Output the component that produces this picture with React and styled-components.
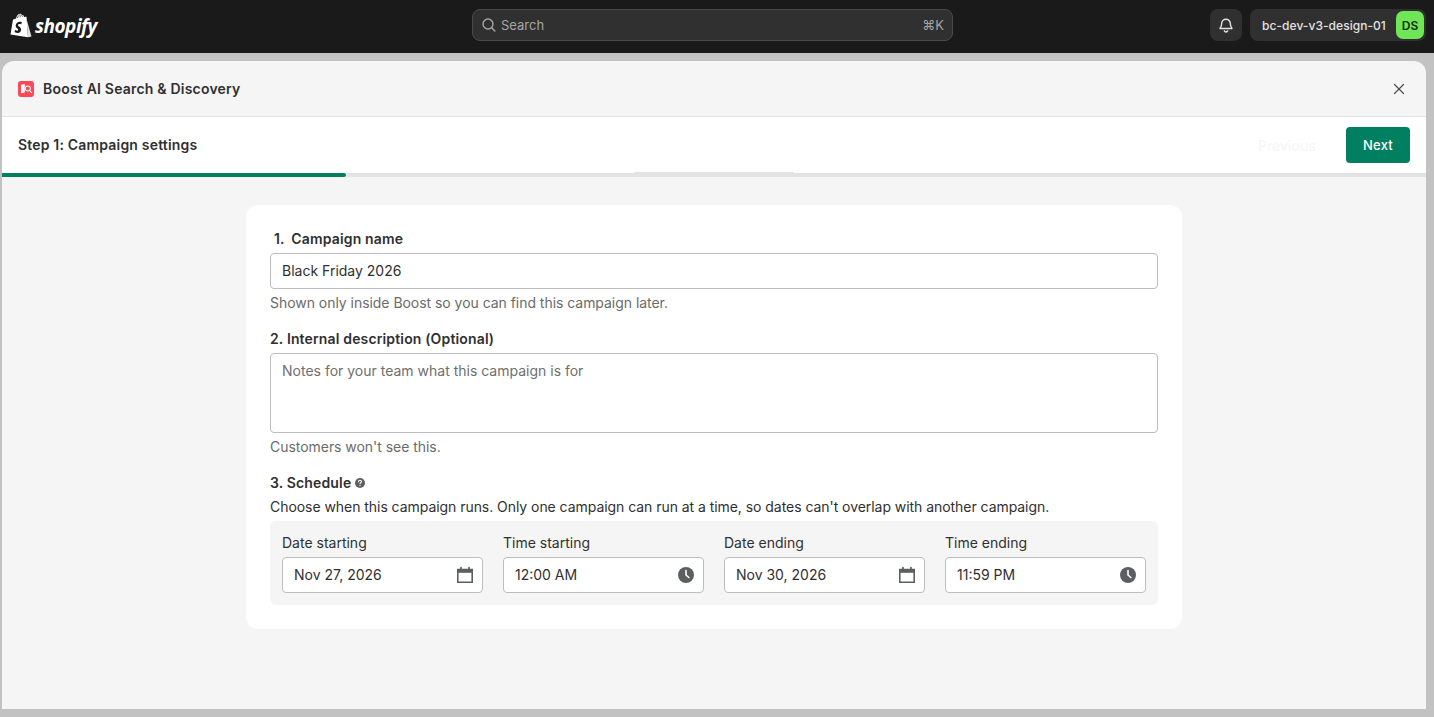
import React from 'react';
import styled, { createGlobalStyle } from 'styled-components';
import { X } from 'lucide-react';

const GlobalStyle = createGlobalStyle`
  html, body {
    margin: 0;
    padding: 0;
    height: 100%;
    overflow: hidden;
    background: #c2c2c2;
    font-family: Inter, "Liberation Sans", sans-serif;
    -webkit-font-smoothing: antialiased;
  }
  * { box-sizing: border-box; }
`;

const Page = styled.div`
  height: 717px;
  display: flex;
  flex-direction: column;
`;

const TopBar = styled.header`
  height: 53px;
  flex: none;
  background: #1a1a1a;
  display: grid;
  grid-template-columns: 452px 481px 1fr;
  align-items: center;
  padding: 0 8px 3px 10px;
  gap: 10px;
`;

const Logo = styled.div`
  display: flex;
  align-items: center;
  gap: 3px;
  color: #fff;
`;

const LogoText = styled.span`
  font-family: "Open Sans", sans-serif;
  font-style: italic;
  font-weight: 700;
  font-size: 19px;
  letter-spacing: -0.5px;
  line-height: 24px;
  margin-top: 1px;
`;

const SearchBox = styled.div`
  height: 32px;
  border: 1px solid #4a4a4a;
  border-radius: 8px;
  background: #303030;
  display: flex;
  align-items: center;
  padding: 0 8px;
  gap: 4px;
  color: #a6a6a6;
  font-size: 13px;
`;

const SearchLabel = styled.span`
  flex: 1;
`;

const Shortcut = styled.span`
  font-size: 13px;
  color: #a6a6a6;
`;

const TopRight = styled.div`
  display: flex;
  justify-content: flex-end;
  gap: 8px;
`;

const BellButton = styled.div`
  width: 32px;
  height: 32px;
  border-radius: 8px;
  background: #303030;
  display: flex;
  align-items: center;
  justify-content: center;
`;

const StoreButton = styled.div`
  height: 32px;
  width: 176px;
  border-radius: 8px;
  background: #303030;
  display: flex;
  align-items: center;
  justify-content: space-between;
  padding: 0 2px 0 12px;
  color: #e3e3e3;
  font-size: 12px;
  font-weight: 450;
  letter-spacing: 0.05px;
`;

const Avatar = styled.span`
  width: 28px;
  height: 28px;
  border-radius: 7px;
  background: #6fe655;
  color: #0f2a0a;
  font-size: 12px;
  font-weight: 600;
  display: flex;
  align-items: center;
  justify-content: center;
`;

const Modal = styled.main`
  margin: 8px 8px 8px 2px;
  flex: 1;
  min-height: 0;
  border-radius: 12px 12px 0 0;
  background: #f5f5f5;
  overflow: hidden;
  display: flex;
  flex-direction: column;
`;

const ModalHeader = styled.div`
  height: 56px;
  flex: none;
  display: flex;
  align-items: center;
  padding: 0 18px 0 16px;
  gap: 9px;
  border-bottom: 1px solid #e3e3e3;
`;

const AppName = styled.h1`
  margin: 0;
  flex: 1;
  font-size: 14px;
  line-height: 20px;
  font-weight: 600;
  letter-spacing: 0.2px;
  color: #303030;
`;

const CloseButton = styled.span`
  display: flex;
  color: #4a4a4a;
`;

const StepBar = styled.div`
  height: 56px;
  flex: none;
  background: #fff;
  display: flex;
  align-items: center;
  padding: 0 16px;
`;

const StepTitle = styled.h2`
  margin: 0;
  flex: 1;
  font-size: 14px;
  line-height: 20px;
  font-weight: 600;
  letter-spacing: 0.18px;
  color: #303030;
`;

const PreviousButton = styled.span`
  font-size: 14px;
  font-weight: 500;
  color: #f7f7f7;
  margin-right: 30px;
`;

const NextButton = styled.button`
  width: 64px;
  height: 36px;
  border: 0;
  border-radius: 4px;
  background: #008060;
  color: #fff;
  font: 500 13px Inter, sans-serif;
  letter-spacing: 0.2px;
`;

const Track = styled.div`
  position: relative;
  height: 4px;
  flex: none;
  background: #e3e3e3;
`;

const TrackFill = styled.div`
  height: 100%;
  width: 344px;
  background: #008060;
  border-radius: 0 2px 2px 0;
`;

const TrackBump = styled.div`
  position: absolute;
  left: 632px;
  top: -1px;
  width: 160px;
  height: 1px;
  border-radius: 2px 2px 0 0;
  background: #e3e3e3;
`;

const Body = styled.div`
  flex: 1;
  display: flex;
  justify-content: center;
  padding-top: 28px;
`;

const Card = styled.section`
  width: 936px;
  height: 424px;
  background: #fff;
  border-radius: 12px;
  padding: 24px;
`;

const Field = styled.div`
  margin-bottom: 16px;
`;

const Label = styled.label`
  display: block;
  font-size: 14px;
  line-height: 20px;
  font-weight: 600;
  letter-spacing: 0.15px;
  color: #303030;
  margin-bottom: 4px;
  padding-left: ${p => p.$indent || 0}px;
`;

const Marker = styled.span`
  margin-right: 3px;
`;

const TextInput = styled.div`
  height: ${p => p.$height || 36}px;
  border: 1px solid #bdbdbd;
  border-radius: 4px;
  background: #fff;
  padding: ${p => (p.$multi ? '7px 11px' : '0 11px')};
  display: flex;
  align-items: ${p => (p.$multi ? 'flex-start' : 'center')};
  font-size: 14px;
  line-height: 20px;
  color: ${p => (p.$placeholder ? '#6f6f6f' : '#303030')};
`;

const Help = styled.p`
  margin: 4px 0 0;
  font-size: 14px;
  line-height: 20px;
  letter-spacing: -0.04px;
  color: #6b6b6b;
`;

const ScheduleLabel = styled(Label)`
  display: flex;
  align-items: center;
  gap: 3px;
`;

const Description = styled.p`
  margin: 0 0 4px;
  font-size: 14px;
  line-height: 20px;
  letter-spacing: -0.05px;
  color: #303030;
`;

const SchedulePanel = styled.div`
  height: 84px;
  border-radius: 6px;
  background: #f5f5f5;
  padding: 12px;
  display: grid;
  grid-template-columns: repeat(4, 1fr);
  gap: 20px;
`;

const PickerLabel = styled.div`
  font-size: 14px;
  line-height: 20px;
  color: #303030;
  margin-bottom: 4px;
`;

const PickerInput = styled(TextInput)`
  justify-content: space-between;
  padding: 0 7px 0 11px;
`;

const CalendarIcon = () => (
  <svg width="20" height="20" viewBox="0 0 20 20" fill="none">
    <path d="M2.800 4.500h14.400v12.700H2.800z" stroke="#5c5f62" strokeWidth="1.600" />
    <path d="M2.500 4h15v3.800h-15z" fill="#5c5f62" />
    <path d="M6 2.500v2M14 2.500v2" stroke="#5c5f62" strokeWidth="1.700" strokeLinecap="round" />
  </svg>
);

const ClockIcon = () => (
  <svg width="20" height="20" viewBox="0 0 20 20">
    <circle cx="10" cy="10" r="8" fill="#5c5f62" />
    <path d="M10 5.600V10l2.800 2.500" fill="none" stroke="#fff" strokeWidth="1.600" strokeLinecap="round" strokeLinejoin="round" />
  </svg>
);

const HelpIcon = () => (
  <svg width="12" height="12" viewBox="0 0 12 12">
    <circle cx="6" cy="6" r="5" fill="#5c5f62" />
    <path d="M4.500 4.700c0-.9.7-1.400 1.500-1.400s1.500.5 1.500 1.300c0 1.100-1.500 1.100-1.500 2.100" fill="none" stroke="#fff" strokeWidth="1.100" strokeLinecap="round" />
    <circle cx="6" cy="8.600" r=".7" fill="#fff" />
  </svg>
);

const ShopifyBag = () => (
  <svg width="22" height="25" viewBox="0 0 22 25">
    <path d="M0.500 21.600 2.900 6.900c.1-.5 2-1 3.200-1.400C6.600 2.800 8.400.8 10.200.8c1 0 1.500.6 1.800 1.300 1-.1 1.800.5 2.300 2l1.600-.4c.3 0 .5.1.6.4l1.500 20.200z" fill="#fff" />
    <path d="M15.900 3.700 21.500 23.400l-3.400.9-2-20.500z" fill="#dfdfdf" />
    <path d="M11.900 9.100l-.8 2.400s-.8-.4-1.700-.4c-1.400 0-1.400.8-1.400 1.100 0 1.100 3.100 1.600 3.100 4.300 0 2.100-1.400 3.500-3.200 3.500-2.200 0-3.300-1.300-3.300-1.300l.6-2s1.100 1 2.100 1c.6 0 .9-.5.9-.9 0-1.500-2.500-1.600-2.500-4 0-2.100 1.500-4.100 4.500-4.100 1.100 0 1.700.4 1.700.4z" fill="#1a1a1a" />
    <path d="M7.400 5c.6-1.800 1.700-3.200 2.900-3.300M10 4.300c.3-1 .6-2 1.500-2.200M12.800 3.900c-.1-.5-.2-1-.7-1.400" fill="none" stroke="#1a1a1a" strokeWidth=".7" />
  </svg>
);

const BoostIcon = () => (
  <svg width="16" height="16" viewBox="0 0 16 16">
    <rect width="16" height="16" rx="3" fill="#fb4a55" />
    <path d="M3 3.800 6.800 3v8.500L3 12.300z" fill="#fff" />
    <circle cx="9.800" cy="7.500" r="2.500" fill="none" stroke="#fff" strokeWidth="1.100" />
    <path d="m11.600 9.500 2 2.200" stroke="#fff" strokeWidth="1.100" strokeLinecap="round" />
  </svg>
);

const BellIcon = () => (
  <svg width="18" height="18" viewBox="0 0 18 18" fill="none" stroke="#e3e3e3" strokeWidth="1.400" strokeLinejoin="round">
    <path d="M4.700 7.500a4.300 4.300 0 0 1 8.600 0c0 2.500.7 3.600 1.700 5H3c1-1.400 1.700-2.500 1.700-5z" />
    <path d="M7.300 14.800a1.800 1.800 0 0 0 3.400 0" strokeLinecap="round" />
  </svg>
);

const SearchIcon = () => (
  <svg width="16" height="16" viewBox="0 0 16 16" fill="none" stroke="#a6a6a6" strokeWidth="1.400" strokeLinecap="round">
    <circle cx="7" cy="7" r="5" />
    <path d="m10.700 10.700 3.200 3.200" />
  </svg>
);

const pickers = [
  { label: 'Date starting', value: 'Nov 27, 2026', icon: <CalendarIcon /> },
  { label: 'Time starting', value: '12:00 AM', icon: <ClockIcon /> },
  { label: 'Date ending', value: 'Nov 30, 2026', icon: <CalendarIcon /> },
  { label: 'Time ending', value: '11:59 PM', icon: <ClockIcon /> }
];

export default function App() {
  return (
    <>
      <GlobalStyle />
      <Page>
        <TopBar>
          <Logo>
            <ShopifyBag />
            <LogoText>shopify</LogoText>
          </Logo>
          <SearchBox>
            <SearchIcon />
            <SearchLabel>Search</SearchLabel>
            <Shortcut>⌘K</Shortcut>
          </SearchBox>
          <TopRight>
            <BellButton><BellIcon /></BellButton>
            <StoreButton>
              bc-dev-v3-design-01
              <Avatar>DS</Avatar>
            </StoreButton>
          </TopRight>
        </TopBar>
        <Modal>
          <ModalHeader>
            <BoostIcon />
            <AppName>Boost AI Search &amp; Discovery</AppName>
            <CloseButton><X size={18} strokeWidth={1.6} /></CloseButton>
          </ModalHeader>
          <StepBar>
            <StepTitle>Step 1: Campaign settings</StepTitle>
            <PreviousButton>Previous</PreviousButton>
            <NextButton>Next</NextButton>
          </StepBar>
          <Track>
            <TrackFill />
            <TrackBump />
          </Track>
          <Body>
            <Card>
              <Field>
                <Label $indent={4}><Marker>1.</Marker> Campaign name</Label>
                <TextInput>Black Friday 2026</TextInput>
                <Help>Shown only inside Boost so you can find this campaign later.</Help>
              </Field>
              <Field>
                <Label>2. Internal description (Optional)</Label>
                <TextInput $multi $placeholder $height={80}>Notes for your team what this campaign is for</TextInput>
                <Help>Customers won't see this.</Help>
              </Field>
              <ScheduleLabel>3. Schedule <HelpIcon /></ScheduleLabel>
              <Description>
                Choose when this campaign runs. Only one campaign can run at a time, so dates can't overlap with another campaign.
              </Description>
              <SchedulePanel>
                {pickers.map(({ label, value, icon }) => (
                  <div key={label}>
                    <PickerLabel>{label}</PickerLabel>
                    <PickerInput>
                      {value}
                      {icon}
                    </PickerInput>
                  </div>
                ))}
              </SchedulePanel>
            </Card>
          </Body>
        </Modal>
      </Page>
    </>
  );
}
